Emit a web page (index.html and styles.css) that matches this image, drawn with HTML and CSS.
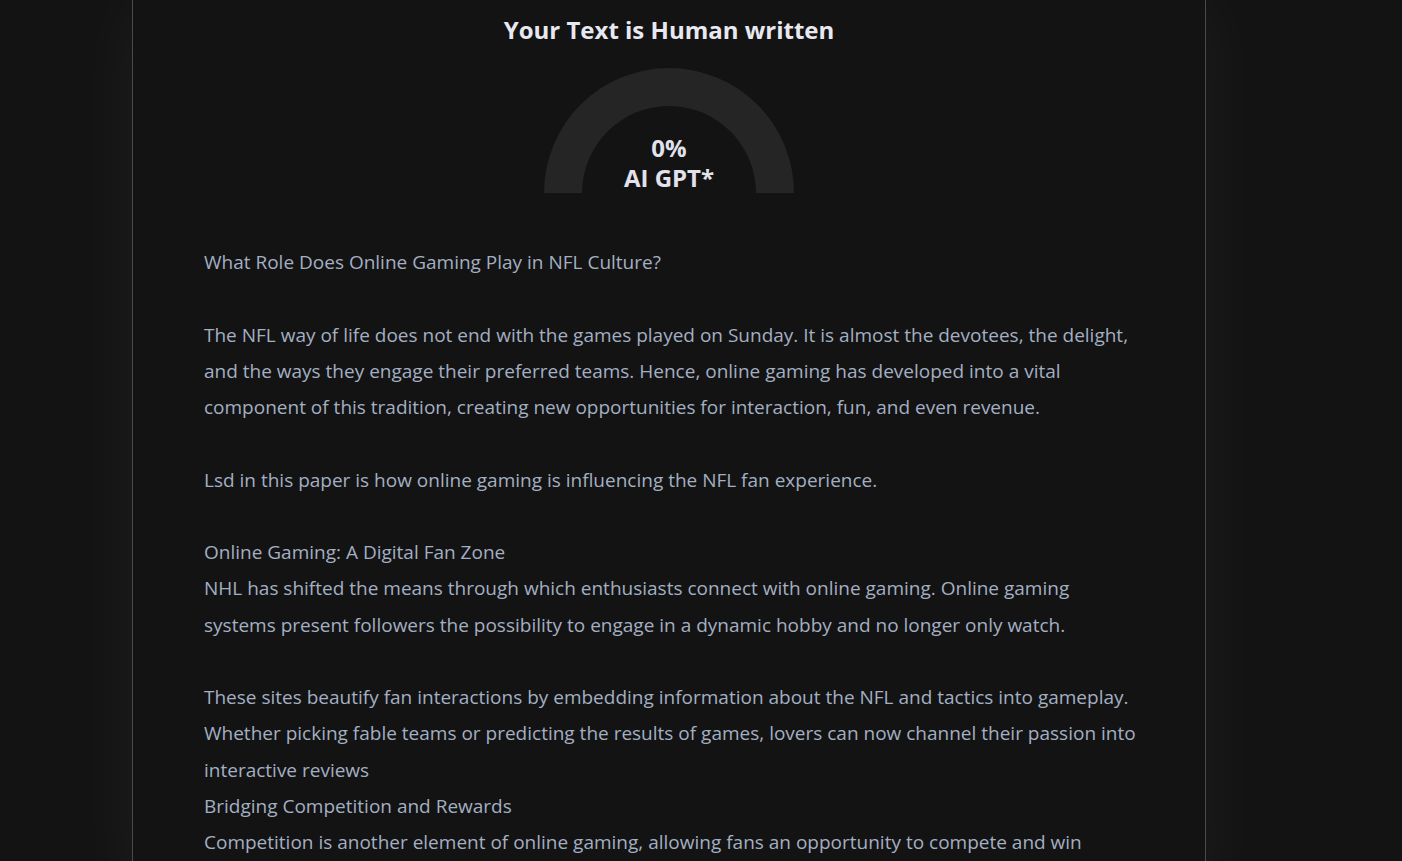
FILE: index.html
```html
<!DOCTYPE html>
<html lang="en">
<head>
    <meta charset="UTF-8">
    <meta name="viewport" content="width=device-width, initial-scale=1.0">
    <title>AI Detector Result</title>
    <link rel="stylesheet" href="styles.css">
</head>
<body>
    <div class="panel">
        <h2 class="result-title">Your Text is Human written</h2>
        <div class="gauge">
            <div class="gauge-value">0%</div>
            <div class="gauge-label">AI GPT*</div>
        </div>
        <div class="checked-text">What Role Does Online Gaming Play in NFL Culture?

The NFL way of life does not end with the games played on Sunday. It is almost the devotees, the delight, and the ways they engage their preferred teams. Hence, online gaming has developed into a vital component of this tradition, creating new opportunities for interaction, fun, and even revenue.

Lsd in this paper is how online gaming is influencing the NFL fan experience.

Online Gaming: A Digital Fan Zone
NHL has shifted the means through which enthusiasts connect with online gaming. Online gaming systems present followers the possibility to engage in a dynamic hobby and no longer only watch.

These sites beautify fan interactions by embedding information about the NFL and tactics into gameplay. Whether picking fable teams or predicting the results of games, lovers can now channel their passion into interactive reviews
Bridging Competition and Rewards
Competition is another element of online gaming, allowing fans an opportunity to compete and win</div>
    </div>
</body>
</html>
```

FILE: styles.css
```css
body {
    margin: 0;
    padding: 0;
    background-color: #131313;
    font-family: "Open Sans", "Noto Sans", sans-serif;
    overflow: hidden;
}
.panel {
    width: 1074px;
    min-height: 900px;
    margin-left: 132px;
    padding: 13px 0 0;
    box-sizing: border-box;
    background-color: #131313;
    border-left: 1px solid #4a4a4a;
    border-right: 1px solid #4a4a4a;
    box-shadow: 0 0 70px rgba(255, 255, 255, 0.05);
    display: flex;
    flex-direction: column;
    align-items: center;
}
.result-title {
    margin: 0;
    font-size: 24px;
    line-height: 34px;
    font-weight: 700;
    color: #e8e9f0;
    text-align: center;
}
.gauge {
    position: relative;
    width: 250px;
    height: 125px;
    margin-top: 21px;
    border-radius: 125px 125px 0 0;
    background-color: #252525;
    display: flex;
    flex-direction: column;
    justify-content: flex-end;
    align-items: center;
    box-sizing: border-box;
}
.gauge::before {
    content: "";
    position: absolute;
    left: 38px;
    right: 38px;
    bottom: 0;
    height: 87px;
    border-radius: 87px 87px 0 0;
    background-color: #131313;
}
.gauge-value, .gauge-label {
    position: relative;
    font-size: 24px;
    line-height: 30px;
    font-weight: 700;
    color: #e2e2ec;
}
.checked-text {
    width: 936px;
    margin-top: 51px;
    align-self: flex-start;
    margin-left: 71px;
    white-space: pre-wrap;
    font-size: 19px;
    line-height: 36.25px;
    color: #a3afc2;
}
```
